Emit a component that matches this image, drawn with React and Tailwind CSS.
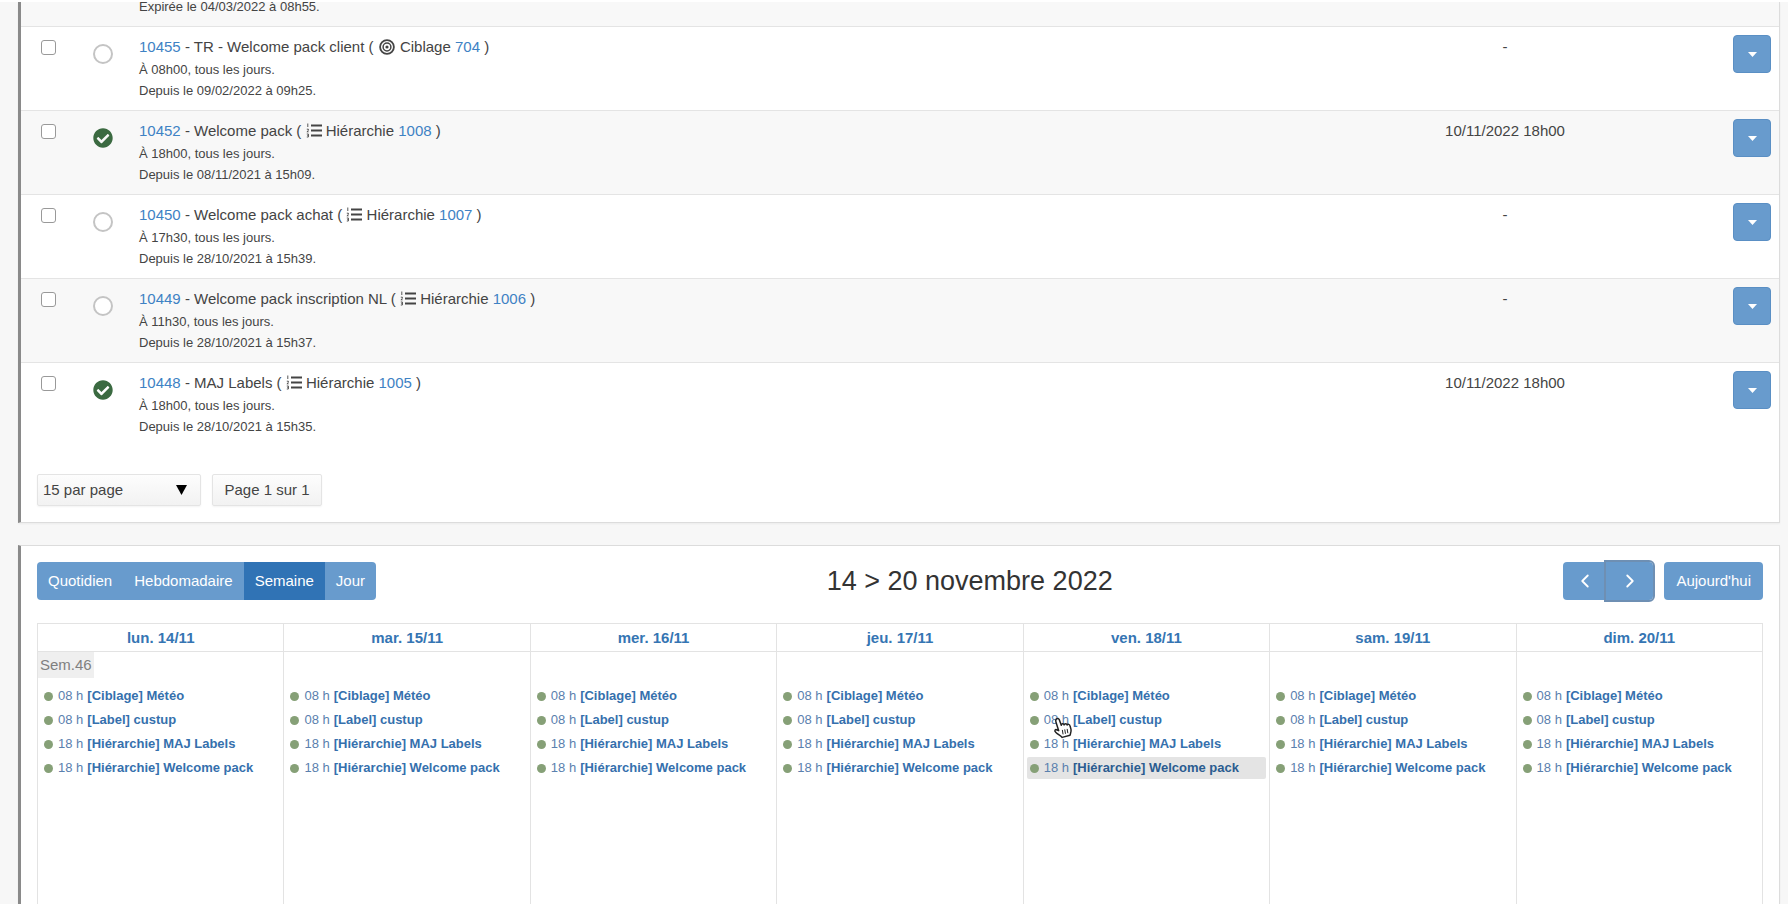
import React, { useState } from "react";
import { FaCheckCircle } from "react-icons/fa";
import { FiChevronLeft, FiChevronRight } from "react-icons/fi";

const TASKS = [
  { id: 10455, name: "TR - Welcome pack client", type: "Ciblage", ref: 704, hour: "08h00", since: "09/02/2022 à 09h25", next: "-", done: false },
  { id: 10452, name: "Welcome pack", type: "Hiérarchie", ref: 1008, hour: "18h00", since: "08/11/2021 à 15h09", next: "10/11/2022 18h00", done: true },
  { id: 10450, name: "Welcome pack achat", type: "Hiérarchie", ref: 1007, hour: "17h30", since: "28/10/2021 à 15h39", next: "-", done: false },
  { id: 10449, name: "Welcome pack inscription NL", type: "Hiérarchie", ref: 1006, hour: "11h30", since: "28/10/2021 à 15h37", next: "-", done: false },
  { id: 10448, name: "MAJ Labels", type: "Hiérarchie", ref: 1005, hour: "18h00", since: "28/10/2021 à 15h35", next: "10/11/2022 18h00", done: true },
];

const DAYS = ["lun. 14/11", "mar. 15/11", "mer. 16/11", "jeu. 17/11", "ven. 18/11", "sam. 19/11", "dim. 20/11"];

const EVENTS = [
  { hour: "08 h", title: "[Ciblage] Météo" },
  { hour: "08 h", title: "[Label] custup" },
  { hour: "18 h", title: "[Hiérarchie] MAJ Labels" },
  { hour: "18 h", title: "[Hiérarchie] Welcome pack" },
];

const VIEWS = ["Quotidien", "Hebdomadaire", "Semaine", "Jour"];

const TargetIcon = () => (
  <svg className="inline align-[-3px] mx-px" width="16" height="16" viewBox="0 0 16 16" fill="none" stroke="currentColor">
    <circle cx="8" cy="8" r="6.9" strokeWidth="1.8" />
    <circle cx="8" cy="8" r="3.9" strokeWidth="1.5" />
    <circle cx="8" cy="8" r="1.6" fill="currentColor" stroke="none" />
  </svg>
);

const ListIcon = () => (
  <svg className="inline align-[-2px]" width="16" height="15" viewBox="0 0 16 15" fill="none" stroke="currentColor">
    <path d="M5 2.5H16M5 7.5H16M5 12.5H16" strokeWidth="1.8" />
    <path d="M1.8 .5V4M.8 6.2H2.4V7.4L.9 8.8H2.6M.8 11H2.4V14H.8M1.4 12.5H2.4" strokeWidth=".9" />
  </svg>
);

const HandCursor = () => (
  <svg
    className="absolute left-[26px] top-2 z-10 pointer-events-none"
    width="20"
    height="22"
    viewBox="0 0 20 22"
    fill="#fff"
    stroke="#222"
    strokeWidth="1.5"
    strokeLinejoin="round"
    strokeLinecap="round"
  >
    <path d="M3.2 2.2C4.4 .8 5.8 1.4 6.4 2.9L8.3 8.2C8.2 6.7 10.6 6.2 11.2 7.9C11.5 6.5 13.6 6.3 14.2 8C14.8 6.9 16.6 7.2 17 8.8L18 12.4C18.5 14.6 17.6 16.2 17 18.2L9.2 20.4C7.6 18.6 5.2 17.6 2.9 15.5C.7 13.5 2.3 12 4.3 13L5.7 13.7L3 5.2C2.6 4 2.5 3 3.2 2.2Z" />
    <path d="M9.4 13.3L10 17M11.8 12.8L12.4 16.4M14.2 12.3L14.8 15.8" strokeWidth="1" />
  </svg>
);

const TaskRow = ({ task }) => (
  <tr className="align-top border-b border-[#e4e4e4] last:border-b-0 odd:bg-[#f8f8f8]">
    <td className="w-[72px] pl-5 pt-[13px]">
      <input
        type="checkbox"
        aria-label={`Sélectionner ${task.id}`}
        className="block appearance-none w-[15px] h-[15px] rounded-[3px] border border-[#999] bg-white"
      />
    </td>
    <td className="w-[46px] pt-[17px]">
      {task.done ? (
        <FaCheckCircle className="w-5 h-5 text-[#3b6a41]" />
      ) : (
        <div className="w-5 h-5 rounded-full border-2 border-[#c4c4c4] bg-white"></div>
      )}
    </td>
    <td className="pt-2 pb-[9px]">
      <div className="text-[15px] leading-6">
        <a href={`#${task.id}`} className="text-[#3e82c4]">{task.id}</a> - {task.name} ({" "}
        {task.type === "Ciblage" ? <TargetIcon /> : <ListIcon />} {task.type}{" "}
        <a href={`#${task.ref}`} className="text-[#3e82c4]">{task.ref}</a> )
      </div>
      <div className="text-[13px] leading-[21px]">À {task.hour}, tous les jours.</div>
      <div className="text-[13px] leading-[21px]">Depuis le {task.since}.</div>
    </td>
    <td className="w-[360px] pt-2 text-[15px] leading-6 text-center">{task.next}</td>
    <td className="w-[94px] pt-2 pr-2">
      <button
        aria-label={`Actions ${task.id}`}
        className="ml-auto flex items-center justify-center w-[38px] h-[38px] rounded-sm bg-[#689bcd] border border-[#5a8fc4]"
      >
        <svg width="9" height="5" viewBox="0 0 9 5" fill="#fff">
          <path d="M0 0H9L4.5 5Z" />
        </svg>
      </button>
    </td>
  </tr>
);

const TaskPanel = () => (
  <div className="bg-white border border-t-0 border-[#dcdcdc] border-l-3 border-l-[#8a8a8a] shadow-xs">
    <table className="w-full border-collapse">
      <tbody>
        <tr className="border-b border-[#e4e4e4] odd:bg-[#f8f8f8]">
          <td colSpan={2}></td>
          <td className="pb-[14px] text-[13px] leading-[10px]">Expirée le 04/03/2022 à 08h55.</td>
          <td colSpan={2}></td>
        </tr>
        {TASKS.map((task) => (
          <TaskRow key={task.id} task={task} />
        ))}
      </tbody>
    </table>
    <div className="flex gap-[11px] px-4 pt-7 pb-4 text-[15px]">
      <div className="relative">
        <select
          aria-label="Lignes par page"
          className="block appearance-none w-[164px] h-8 pl-[5px] rounded-xs border border-[#e4e4e4] bg-linear-to-b from-[#fdfdfd] to-[#f2f2f2] shadow-xs"
        >
          <option>15 par page</option>
        </select>
        <svg className="absolute right-[14px] top-[11px] pointer-events-none" width="11" height="10" viewBox="0 0 11 10">
          <path d="M0 0H11L5.5 10Z" />
        </svg>
      </div>
      <button className="w-[110px] h-8 rounded-xs border border-[#e4e4e4] bg-linear-to-b from-[#fdfdfd] to-[#f2f2f2] shadow-xs">
        Page 1 sur 1
      </button>
    </div>
  </div>
);

const CalendarPanel = () => {
  const [view, setView] = useState("Semaine");

  return (
    <div className="grow flex flex-col p-4 pb-0 bg-white border border-b-0 border-[#dcdcdc] border-l-3 border-l-[#8a8a8a] shadow-xs">
      <div className="flex items-center justify-between text-[15px] text-white">
        <div className="flex rounded-sm overflow-hidden">
          {VIEWS.map((v) => (
            <button
              key={v}
              onClick={() => setView(v)}
              className={`h-[38px] px-[11px] ${v === view ? "bg-[#3073b5]" : "bg-[#689bcd]"}`}
            >
              {v}
            </button>
          ))}
        </div>
        <h2 className="text-[27px] leading-8 text-[#333]">14 &gt; 20 novembre 2022</h2>
        <div className="flex gap-[11px]">
          <div className="flex">
            <button aria-label="Précédent" className="flex items-center justify-center w-[43px] h-[38px] rounded-l-sm bg-[#689bcd]">
              <FiChevronLeft className="w-[22px] h-[22px]" />
            </button>
            <button
              aria-label="Suivant"
              className="flex items-center justify-center w-[47px] h-[38px] rounded-r-sm bg-[#689bcd] outline-2 outline-[#6e8fb3]"
            >
              <FiChevronRight className="w-[22px] h-[22px]" />
            </button>
          </div>
          <button className="h-[38px] px-3 rounded-sm bg-[#689bcd]">Aujourd'hui</button>
        </div>
      </div>

      <div className="grow grid grid-cols-7 mt-[23px] border-l border-t border-[#e3e3e3]">
        {DAYS.map((day, i) => (
          <div key={day} className="flex flex-col border-r border-[#e3e3e3]">
            <div className="h-7 border-b border-[#e3e3e3] text-center text-[15px] leading-7 font-bold text-[#3575b3]">
              {day}
            </div>
            <div className="h-[33px]">
              {i === 0 && (
                <span className="inline-block h-[26px] px-[2px] bg-[#efefef] text-[15px] leading-[26px] text-[#808080]">
                  Sem.46
                </span>
              )}
            </div>
            <div className="relative flex flex-col gap-[2px] mx-[3px]">
              {EVENTS.map((event, j) => (
                <a
                  key={event.title}
                  href="#event"
                  className={`relative flex items-center h-[22px] pl-[3px] rounded-xs text-[13px] whitespace-nowrap ${
                    i === 4 && j === 3 ? "bg-[#e4e4e4] text-[#2b5c90]" : "text-[#3570ad]"
                  }`}
                >
                  <span className="w-[9px] h-[9px] mr-[5px] rounded-full bg-[#86a077]"></span>
                  <span className="mr-1 text-[#5a80ae]">{event.hour}</span>
                  <span className="font-bold">{event.title}</span>
                  {i === 4 && j === 1 && <HandCursor />}
                </a>
              ))}
            </div>
          </div>
        ))}
      </div>
    </div>
  );
};

export default function App() {
  return (
    <div className="min-h-screen flex flex-col gap-[22px] pl-[18px] pr-2 bg-[#f7f7f7] border-t-2 border-white font-['Liberation_Sans',Arial,sans-serif] text-[#444]">
      <TaskPanel />
      <CalendarPanel />
    </div>
  );
}
